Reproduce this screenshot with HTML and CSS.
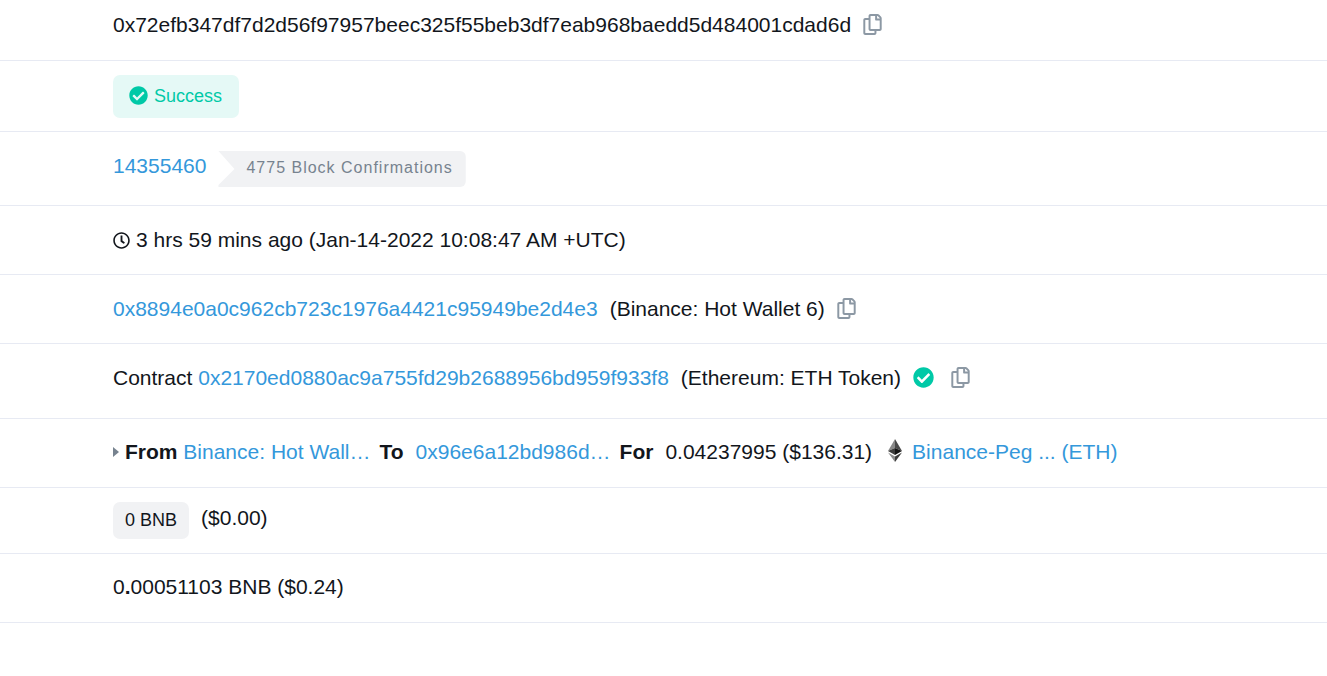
FILE: index.html
```html
<!DOCTYPE html>
<html lang="en">
<head>
    <meta charset="UTF-8">
    <meta name="viewport" content="width=device-width, initial-scale=1.0">
    <title>Transaction Details</title>
    <link rel="stylesheet" href="styles.css">
</head>
<body>
    <!-- shared icons -->
    <svg class="sprite" aria-hidden="true">
        <symbol id="copy" viewBox="0 0 448 512">
            <path d="M433.941 65.941l-51.882-51.882A48 48 0 0 0 348.118 0H176c-26.51 0-48 21.49-48 48v48H48c-26.51 0-48 21.49-48 48v320c0 26.51 21.49 48 48 48h224c26.51 0 48-21.49 48-48v-48h80c26.51 0 48-21.49 48-48V99.882a48 48 0 0 0-14.059-33.941zM266 464H54a6 6 0 0 1-6-6V150a6 6 0 0 1 6-6h74v224c0 26.51 21.49 48 48 48h96v42a6 6 0 0 1-6 6zm128-96H182a6 6 0 0 1-6-6V54a6 6 0 0 1 6-6h106v88c0 13.255 10.745 24 24 24h88v202a6 6 0 0 1-6 6zm6-256h-64V48h9.632c1.591 0 3.117.632 4.243 1.757l48.368 48.368a6 6 0 0 1 1.757 4.243V112z"/>
        </symbol>
        <symbol id="check" viewBox="0 0 512 512">
            <path d="M504 256c0 136.967-111.033 248-248 248S8 392.967 8 256 119.033 8 256 8s248 111.033 248 248zM227.314 387.314l184-184c6.248-6.248 6.248-16.379 0-22.627l-22.627-22.627c-6.248-6.249-16.379-6.249-22.628 0L216 308.118l-70.059-70.059c-6.248-6.248-16.379-6.248-22.628 0l-22.627 22.627c-6.248 6.248-6.248 16.379 0 22.627l104 104c6.249 6.249 16.379 6.249 22.628.001z"/>
        </symbol>
    </svg>

    <main class="details">
        <div class="row row-hash">
            <span>0x72efb347df7d2d56f97957beec325f55beb3df7eab968baedd5d484001cdad6d</span>
            <button class="copy-button" type="button" aria-label="Copy transaction hash"><svg><use href="#copy"/></svg></button>
        </div>

        <div class="row row-status">
            <span class="badge badge-success"><svg class="check-small"><use href="#check"/></svg>Success</span>
        </div>

        <div class="row row-block">
            <a href="#">14355460</a>
            <span class="confirmations">4775 Block Confirmations</span>
        </div>

        <div class="row row-time">
            <svg class="clock" viewBox="0 0 512 512">
                <path d="M256 8C119 8 8 119 8 256s111 248 248 248 248-111 248-248S393 8 256 8zm0 448c-110.500 0-200-89.500-200-200S145.500 56 256 56s200 89.500 200 200-89.500 200-200 200zm61.800-104.400l-84.900-61.700c-3.100-2.300-4.900-5.900-4.900-9.700V116c0-6.600 5.400-12 12-12h32c6.600 0 12 5.400 12 12v141.700l66.800 48.600c5.400 3.900 6.500 11.400 2.600 16.800L334.600 349c-3.900 5.300-11.400 6.500-16.800 2.600z"/>
            </svg>
            <span>3 hrs 59 mins ago (Jan-14-2022 10:08:47 AM +UTC)</span>
        </div>

        <div class="row">
            <a href="#">0x8894e0a0c962cb723c1976a4421c95949be2d4e3</a>
            <span>(Binance: Hot Wallet 6)</span>
            <button class="copy-button" type="button" aria-label="Copy sender address"><svg><use href="#copy"/></svg></button>
        </div>

        <div class="row row-contract">
            <span>Contract <a href="#">0x2170ed0880ac9a755fd29b2688956bd959f933f8</a></span>
            <span>(Ethereum: ETH Token)</span>
            <svg class="check"><use href="#check"/></svg>
            <button class="copy-button copy-spaced" type="button" aria-label="Copy contract address"><svg><use href="#copy"/></svg></button>
        </div>

        <div class="row row-transfer">
            <span class="from"><i class="caret"></i><span><b>From</b> <a href="#">Binance: Hot Wall…</a></span></span>
            <span class="pair"><b>To</b><a href="#">0x96e6a12bd986d…</a></span>
            <span class="pair"><b>For</b><span>0.04237995 ($136.31)</span></span>
            <span class="token">
                <svg class="eth" viewBox="0 0 14 23">
                    <path fill="#8a8a8a" d="M7 0L0 12l7-3z"/>
                    <path fill="#4a4a4a" d="M7 0l7 12-7-3z"/>
                    <path fill="#3c3c3b" d="M0 12l7-3v7z"/>
                    <path fill="#141414" d="M14 12L7 9v7z"/>
                    <path fill="#8c8c8c" d="M0 13.500l7 4V23z"/>
                    <path fill="#3c3c3b" d="M14 13.500l-7 4V23z"/>
                </svg>
                <a href="#">Binance-Peg ... (ETH)</a>
            </span>
        </div>

        <div class="row row-value">
            <span class="badge badge-value">0 BNB</span>
            <span>($0.00)</span>
        </div>

        <div class="row row-fee">
            <span>0<b>.</b>00051103 BNB ($0.24)</span>
        </div>
    </main>
</body>
</html>
```
FILE: styles.css
```css
* {
    margin: 0;
    padding: 0;
    box-sizing: border-box;
}

body {
    font-family: 'Liberation Sans', Arial, sans-serif;
    font-size: 21px;
    line-height: 32px;
    color: #12161c;
    background: #fff;
}

a {
    color: #3498db;
    text-decoration: none;
}

svg {
    display: block;
    flex: none;
    fill: currentColor;
}

.sprite {
    display: none;
}

.row {
    display: flex;
    align-items: center;
    gap: 12px;
    padding: 18px 16px 18px 113px;
    border-bottom: 1px solid #e7eaf3;
    white-space: nowrap;
}

.row-hash {
    padding-top: 9px;
    padding-bottom: 19px;
}

.row-status {
    padding-top: 14px;
    padding-bottom: 13px;
}

.row-value {
    align-items: flex-start;
    padding-top: 14px;
    padding-bottom: 14px;
}

.row-block {
    align-items: flex-start;
}

.row-time {
    gap: 6px;
}

.row-contract {
    padding-bottom: 24px;
}

.row-transfer {
    gap: 9px;
}

.row-transfer,
.row-fee {
    padding-top: 17px;
    padding-bottom: 19px;
}

/* badges */
.badge {
    display: flex;
    align-items: center;
    border-radius: 7px;
    font-size: 18px;
}

.badge-success {
    gap: 6px;
    height: 43px;
    padding: 0 17px 1px 16px;
    color: #00c9a7;
    background: #e5f9f6;
}

.badge-value {
    height: 37px;
    padding: 0 12px 1px;
    background: #f1f2f4;
}

.confirmations {
    margin-top: 1px;
    padding: 1px 13px 3px 28px;
    border-radius: 0 6px 6px 0;
    font-size: 16px;
    letter-spacing: 1px;
    color: #77838f;
    background: #f1f2f4;
    clip-path: polygon(0 0, 100% 0, 100% 100%, 0 100%, 0 calc(100% - 2px), 16px 50%);
}

/* icons */
.copy-button {
    padding-bottom: 2px;
    border: none;
    background: none;
    color: #8c98a4;
    cursor: pointer;
}

.copy-button svg {
    width: 19px;
    height: 21px;
}

.copy-spaced {
    margin-left: 5px;
}

.check {
    width: 21px;
    height: 21px;
    margin-bottom: 2px;
    color: #00c9a7;
}

.check-small {
    width: 19px;
    height: 19px;
    margin-bottom: 1px;
}

.clock {
    width: 17px;
    height: 17px;
}

.eth {
    width: 14px;
    height: 23px;
    margin-bottom: 4px;
}

/* token transfer */
.from {
    display: flex;
    align-items: center;
    gap: 6px;
}

.caret {
    border: 5px solid transparent;
    border-left: 6px solid #77838f;
    border-right: none;
}

.pair {
    display: flex;
    gap: 12px;
}

.token {
    display: flex;
    align-items: center;
    gap: 10px;
    margin-left: 7px;
}
```
